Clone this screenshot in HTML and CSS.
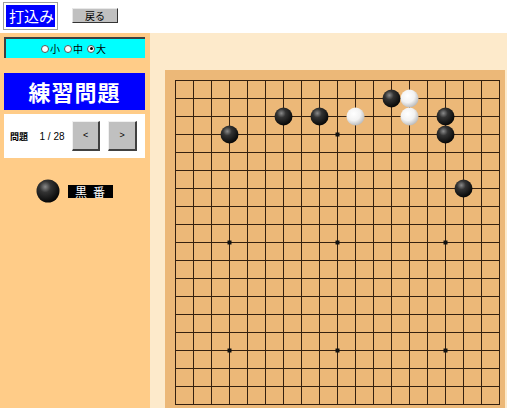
FILE: index.html
```html
<!DOCTYPE html>
<html lang="ja">
<head>
<meta charset="utf-8">
<title>練習問題</title>
<link rel="stylesheet" href="styles.css">
</head>
<body>
<div class="top">
  <div class="btn-input">打込み</div>
  <div class="btn-back">戻る</div>
</div>
<div class="main">
  <aside class="side">
    <div class="size-panel">
      <span class="radio"></span><span class="rlabel">小</span>
      <span class="radio"></span><span class="rlabel">中</span>
      <span class="radio checked"></span><span class="rlabel">大</span>
    </div>
    <div class="title">練習問題</div>
    <div class="nav">
      <span class="nav-label">問題</span>
      <span class="nav-count">1 / 28</span>
      <div class="nav-btn">&lt;</div>
      <div class="nav-btn">&gt;</div>
    </div>
    <div class="turn">
      <svg class="turn-stone" width="24" height="24" viewBox="0 0 24 24">
        <defs>
          <radialGradient id="tb" cx="0.38" cy="0.32" r="0.7">
            <stop offset="0" stop-color="#8a8a8a"/>
            <stop offset="0.35" stop-color="#333"/>
            <stop offset="1" stop-color="#050505"/>
          </radialGradient>
        </defs>
        <circle cx="12" cy="12" r="11.5" fill="url(#tb)"/>
      </svg>
      <span class="turn-label">黒番</span>
    </div>
  </aside>
  <section class="stage">
    <div class="board">
      <svg id="goban" width="340" height="340" viewBox="0 0 340 340"></svg>
    </div>
  </section>
</div>
<script src="board.js"></script>
</body>
</html>
```
FILE: styles.css
```css
html, body {
  margin: 0;
  padding: 0;
}
body {
  width: 507px;
  height: 408px;
  overflow: hidden;
  background: #fff;
  font-family: "Noto Sans CJK JP", "Liberation Sans", sans-serif;
}
.top {
  height: 33px;
  box-sizing: border-box;
  padding: 2px 0 0 3px;
  display: flex;
  align-items: flex-start;
  background: #fff;
}
.btn-input {
  width: 55px;
  height: 28px;
  box-sizing: border-box;
  border: 1px solid #a0a0a0;
  box-shadow: inset 0 0 0 2px #fff;
  background: #0000ff;
  color: #fff;
  font-size: 15px;
  line-height: 26px;
  padding-left: 5px;
}
.btn-back {
  margin: 6px 0 0 14px;
  width: 46px;
  height: 15px;
  box-sizing: border-box;
  background: #c0c0c0;
  border-top: 1px solid #e8e8e8;
  border-left: 1px solid #e8e8e8;
  border-right: 1px solid #333;
  border-bottom: 1px solid #333;
  font-size: 10px;
  line-height: 13px;
  text-align: center;
  color: #000;
}
.main {
  display: flex;
  height: 375px;
}
.side {
  width: 150px;
  flex: none;
  background: #ffcc88;
  box-sizing: border-box;
  padding: 4px 5px 0 4px;
  display: flex;
  flex-direction: column;
}
.size-panel {
  height: 21px;
  box-sizing: border-box;
  background: #00ffff;
  border-top: 2px solid #404040;
  border-left: 2px solid #404040;
  display: flex;
  align-items: center;
  justify-content: center;
  font-size: 10px;
  color: #000;
  padding-right: 6px;
}
.radio {
  width: 8px;
  height: 8px;
  box-sizing: border-box;
  border-radius: 50%;
  background: #fff;
  border: 1px solid #555;
  margin: 0 1px 0 3px;
  position: relative;
}
.radio.checked::after {
  content: "";
  position: absolute;
  left: 1.5px;
  top: 1.5px;
  width: 3px;
  height: 3px;
  border-radius: 50%;
  background: #000;
}
.rlabel {
  line-height: 12px;
  margin-right: 1px;
}
.title {
  margin-top: 15px;
  height: 37px;
  background: #0000ff;
  color: #fff;
  font-size: 22px;
  font-weight: bold;
  line-height: 37px;
  text-align: center;
  letter-spacing: 1px;
}
.nav {
  margin-top: 4px;
  height: 44px;
  background: #fff;
  display: flex;
  align-items: center;
  box-sizing: border-box;
  padding-left: 6px;
}
.nav-label {
  font-size: 9px;
  font-weight: bold;
  width: 30px;
  color: #000;
}
.nav-count {
  font-family: "Liberation Sans", sans-serif;
  font-size: 10px;
  width: 33px;
  color: #000;
}
.nav-btn {
  width: 29px;
  height: 30px;
  box-sizing: border-box;
  background: #c0c0c0;
  border-top: 1px solid #f0f0f0;
  border-left: 1px solid #f0f0f0;
  border-right: 2px solid #404040;
  border-bottom: 2px solid #404040;
  font-family: "Liberation Sans", sans-serif;
  font-size: 9px;
  line-height: 27px;
  text-align: center;
  color: #000;
  margin-right: 8px;
}
.turn {
  margin-top: 21px;
  display: flex;
  align-items: center;
  padding-left: 32px;
}
.turn-stone {
  display: block;
}
.turn-label {
  margin-left: 8px;
  width: 45px;
  height: 13px;
  background: #000;
  color: #fff;
  font-size: 12px;
  line-height: 13px;
  letter-spacing: 6px;
  box-sizing: border-box;
  padding-left: 7px;
}
.stage {
  flex: 1;
  background: #fdeacb;
  padding: 37px 0 0 15px;
  box-sizing: border-box;
  overflow: hidden;
}
.board {
  width: 340px;
  height: 340px;
  background: #ecb878;
}
.board svg {
  display: block;
}
```
FILE: board.js
```js
(function () {
  var svg = document.getElementById('goban');
  var NS = 'http://www.w3.org/2000/svg';
  var O = 10, S = 18, N = 19;
  function el(name, attrs) {
    var e = document.createElementNS(NS, name);
    for (var k in attrs) e.setAttribute(k, attrs[k]);
    svg.appendChild(e);
    return e;
  }
  var defs = el('defs', {});
  defs.innerHTML =
    '<radialGradient id="gb" cx="0.38" cy="0.32" r="0.7">' +
    '<stop offset="0" stop-color="#8a8a8a"/><stop offset="0.35" stop-color="#333"/><stop offset="1" stop-color="#050505"/></radialGradient>' +
    '<radialGradient id="gw" cx="0.4" cy="0.35" r="0.75">' +
    '<stop offset="0" stop-color="#ffffff"/><stop offset="0.5" stop-color="#f2f2f2"/><stop offset="1" stop-color="#aaaaaa"/></radialGradient>';
  for (var i = 0; i < N; i++) {
    var p = O + i * S + 0.5;
    el('line', { x1: O, y1: p, x2: O + (N - 1) * S + 1, y2: p, stroke: '#35200f', 'stroke-width': 1 });
    el('line', { x1: p, y1: O, x2: p, y2: O + (N - 1) * S + 1, stroke: '#35200f', 'stroke-width': 1 });
  }
  [3, 9, 15].forEach(function (r) {
    [3, 9, 15].forEach(function (c) {
      el('rect', { x: O + c * S - 1.5, y: O + r * S - 1.5, width: 4, height: 4, fill: '#111' });
    });
  });
  var stones = [
    [3, 3, 'b'], [6, 2, 'b'], [8, 2, 'b'], [10, 2, 'w'],
    [12, 1, 'b'], [13, 1, 'w'], [13, 2, 'w'],
    [15, 2, 'b'], [15, 3, 'b'], [16, 6, 'b']
  ];
  stones.forEach(function (s) {
    el('circle', {
      cx: O + s[0] * S + 0.5, cy: O + s[1] * S + 0.5, r: 9,
      fill: s[2] === 'b' ? 'url(#gb)' : 'url(#gw)'
    });
  });
})();
```
